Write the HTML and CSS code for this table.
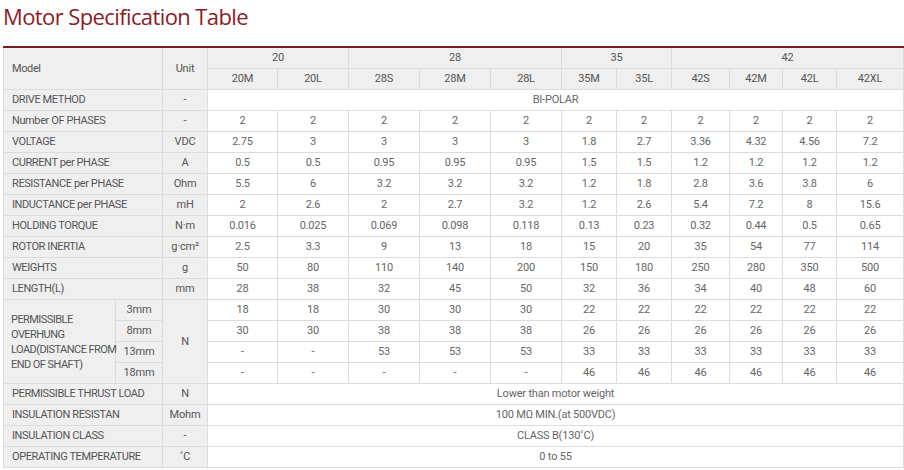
FILE: index.html
```html
<!DOCTYPE html>
<html>
<head>
<meta charset="utf-8">
<link rel="stylesheet" href="styles.css">
</head>
<body>
<div class="page">
  <h1 class="title">Motor Specification Table</h1>
  <table class="spec">
    <colgroup>
      <col class="c-label"><col class="c-sub"><col class="c-unit">
      <col class="c70"><col class="c71"><col class="c71"><col class="c71"><col class="c71">
      <col class="c55"><col class="c55"><col class="c58"><col class="c53"><col class="c54"><col class="c67">
    </colgroup>
    <thead>
      <tr class="h1">
        <th class="lab" colspan="2" rowspan="2">Model</th>
        <th class="unit" rowspan="2">Unit</th>
        <th colspan="2">20</th>
        <th colspan="3">28</th>
        <th colspan="2">35</th>
        <th colspan="4">42</th>
      </tr>
      <tr class="h2">
        <th>20M</th><th>20L</th><th>28S</th><th>28M</th><th>28L</th><th>35M</th><th>35L</th><th>42S</th><th>42M</th><th>42L</th><th>42XL</th>
      </tr>
    </thead>
    <tbody>
      <tr><th class="lab" colspan="2">DRIVE METHOD</th><th class="unit">-</th><td colspan="11">BI-POLAR</td></tr>
      <tr><th class="lab" colspan="2">Number OF PHASES</th><th class="unit">-</th><td>2</td><td>2</td><td>2</td><td>2</td><td>2</td><td>2</td><td>2</td><td>2</td><td>2</td><td>2</td><td>2</td></tr>
      <tr><th class="lab" colspan="2">VOLTAGE</th><th class="unit">VDC</th><td>2.75</td><td>3</td><td>3</td><td>3</td><td>3</td><td>1.8</td><td>2.7</td><td>3.36</td><td>4.32</td><td>4.56</td><td>7.2</td></tr>
      <tr><th class="lab" colspan="2">CURRENT per PHASE</th><th class="unit">A</th><td>0.5</td><td>0.5</td><td>0.95</td><td>0.95</td><td>0.95</td><td>1.5</td><td>1.5</td><td>1.2</td><td>1.2</td><td>1.2</td><td>1.2</td></tr>
      <tr><th class="lab" colspan="2">RESISTANCE per PHASE</th><th class="unit">Ohm</th><td>5.5</td><td>6</td><td>3.2</td><td>3.2</td><td>3.2</td><td>1.2</td><td>1.8</td><td>2.8</td><td>3.6</td><td>3.8</td><td>6</td></tr>
      <tr><th class="lab" colspan="2">INDUCTANCE per PHASE</th><th class="unit">mH</th><td>2</td><td>2.6</td><td>2</td><td>2.7</td><td>3.2</td><td>1.2</td><td>2.6</td><td>5.4</td><td>7.2</td><td>8</td><td>15.6</td></tr>
      <tr><th class="lab" colspan="2">HOLDING TORQUE</th><th class="unit">N·m</th><td>0.016</td><td>0.025</td><td>0.069</td><td>0.098</td><td>0.118</td><td>0.13</td><td>0.23</td><td>0.32</td><td>0.44</td><td>0.5</td><td>0.65</td></tr>
      <tr><th class="lab" colspan="2">ROTOR INERTIA</th><th class="unit">g·cm²</th><td>2.5</td><td>3.3</td><td>9</td><td>13</td><td>18</td><td>15</td><td>20</td><td>35</td><td>54</td><td>77</td><td>114</td></tr>
      <tr><th class="lab" colspan="2">WEIGHTS</th><th class="unit">g</th><td>50</td><td>80</td><td>110</td><td>140</td><td>200</td><td>150</td><td>180</td><td>250</td><td>280</td><td>350</td><td>500</td></tr>
      <tr><th class="lab" colspan="2">LENGTH(L)</th><th class="unit">mm</th><td>28</td><td>38</td><td>32</td><td>45</td><td>50</td><td>32</td><td>36</td><td>34</td><td>40</td><td>48</td><td>60</td></tr>
      <tr><th class="lab multi" rowspan="4">PERMISSIBLE<br>OVERHUNG<br>LOAD(DISTANCE FROM<br>END OF SHAFT)</th><th class="sub">3mm</th><th class="unit" rowspan="4">N</th><td>18</td><td>18</td><td>30</td><td>30</td><td>30</td><td>22</td><td>22</td><td>22</td><td>22</td><td>22</td><td>22</td></tr>
      <tr><th class="sub">8mm</th><td>30</td><td>30</td><td>38</td><td>38</td><td>38</td><td>26</td><td>26</td><td>26</td><td>26</td><td>26</td><td>26</td></tr>
      <tr><th class="sub">13mm</th><td>-</td><td>-</td><td>53</td><td>53</td><td>53</td><td>33</td><td>33</td><td>33</td><td>33</td><td>33</td><td>33</td></tr>
      <tr><th class="sub">18mm</th><td>-</td><td>-</td><td>-</td><td>-</td><td>-</td><td>46</td><td>46</td><td>46</td><td>46</td><td>46</td><td>46</td></tr>
      <tr><th class="lab" colspan="2">PERMISSIBLE THRUST LOAD</th><th class="unit">N</th><td colspan="11">Lower than motor weight</td></tr>
      <tr><th class="lab" colspan="2">INSULATION RESISTAN</th><th class="unit">Mohm</th><td colspan="11">100 MΩ MIN.(at 500VDC)</td></tr>
      <tr><th class="lab" colspan="2">INSULATION CLASS</th><th class="unit">-</th><td colspan="11">CLASS B(130˚C)</td></tr>
      <tr><th class="lab" colspan="2">OPERATING TEMPERATURE</th><th class="unit">˚C</th><td colspan="11">0 to 55</td></tr>
    </tbody>
  </table>
</div>
</body>
</html>
```
FILE: styles.css
```css
html, body {
  margin: 0;
  padding: 0;
  background: #ffffff;
}
.page {
  padding: 0 1px 0 3px;
}
.title {
  margin: 0;
  padding-top: 1px;
  height: 46px;
  box-sizing: border-box;
  font-family: "Open Sans", "Liberation Sans", sans-serif;
  font-weight: 500;
  font-size: 22px;
  line-height: 30px;
  color: #8c1c25;
  letter-spacing: -0.6px;
}
.spec {
  width: 900px;
  table-layout: fixed;
  border-collapse: collapse;
  border-top: 2px solid #7a1a21;
  font-family: Roboto, "Liberation Sans", sans-serif;
  font-size: 11px;
  color: #555555;
}
.c-label { width: 112px; }
.c-sub { width: 47px; }
.c-unit { width: 45px; }
.c70 { width: 70px; }
.c71 { width: 71px; }
.c55 { width: 55px; }
.c58 { width: 58px; }
.c53 { width: 53px; }
.c54 { width: 54px; }
.c67 { width: 67px; }
.spec th, .spec td {
  border: 1px solid #dcdcdc;
  padding: 0;
  height: 20px;
  line-height: 14px;
  text-align: center;
  font-weight: 400;
  vertical-align: middle;
  white-space: nowrap;
  letter-spacing: -0.2px;
}
.spec thead th {
  background: #efefef;
}
.spec tr.h1 th {
  height: 20px;
}
.spec tbody th {
  background: #efefef;
}
.spec td {
  background: #ffffff;
  color: #666666;
}
.spec th.lab {
  text-align: left;
  padding-left: 8px;
  letter-spacing: -0.4px;
}
.spec th.multi {
  padding-left: 7px;
  line-height: 15px;
  letter-spacing: -0.55px;
}
```
